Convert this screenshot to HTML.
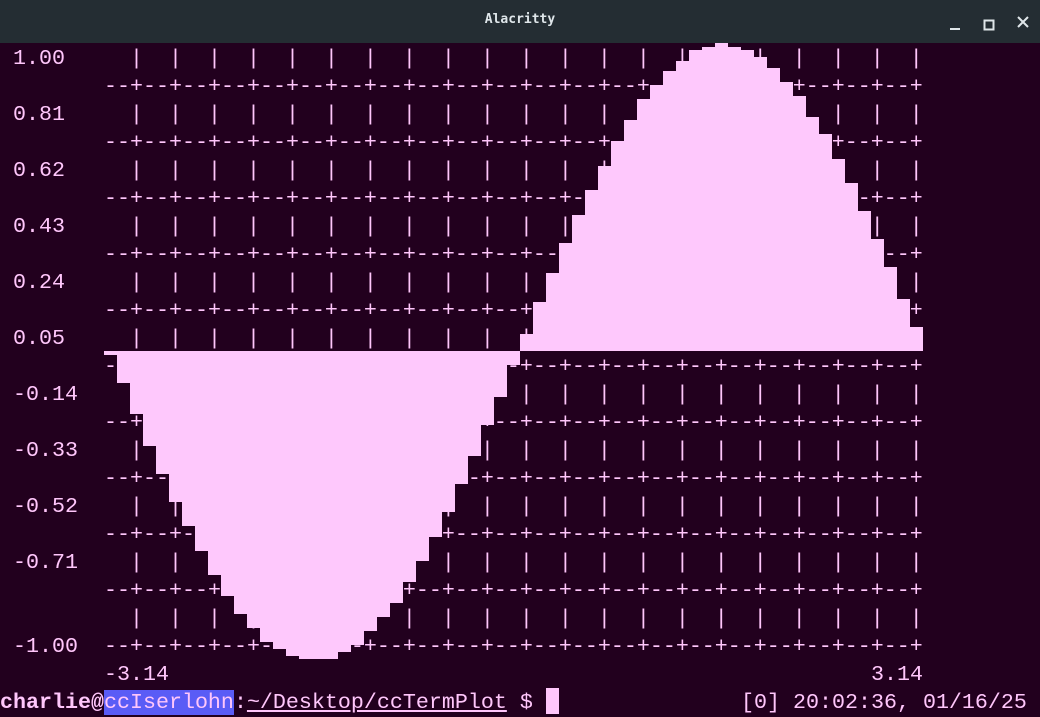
<!DOCTYPE html>
<html><head><meta charset="utf-8">
<style>
html,body{margin:0;padding:0;}
body{width:1040px;height:715px;overflow:hidden;background:#22001e;position:relative;
font-family:"Liberation Mono","DejaVu Sans Mono",monospace;}
#title{position:absolute;left:0;top:0;width:1040px;height:43px;background:#242d33;}
#title .t{position:absolute;left:0;width:1040px;top:12px;text-align:center;color:#dfe6ea;font:bold 13px "DejaVu Sans Mono","Liberation Mono",monospace;}
.r{position:absolute;height:28px;line-height:28px;font-size:21.667px;color:#ffc6fb;white-space:pre;margin-top:2px;}
svg{position:absolute;left:0;top:0;}
</style></head><body>
<div id="title"><div class="t">Alacritty</div>
<svg width="1040" height="43" style="position:absolute;left:0;top:0">
<rect x="950" y="28" width="10" height="2" fill="#dfe6ea"/>
<rect x="984.5" y="20.5" width="9" height="9" fill="none" stroke="#dfe6ea" stroke-width="2"/>
<path d="M1018 17 L1028 27 M1028 17 L1018 27" stroke="#dfe6ea" stroke-width="2"/>
</svg></div>

<div class="r" style="left:13px;top:43px">1.00</div>
<div class="r" style="left:13px;top:99px">0.81</div>
<div class="r" style="left:13px;top:155px">0.62</div>
<div class="r" style="left:13px;top:211px">0.43</div>
<div class="r" style="left:13px;top:267px">0.24</div>
<div class="r" style="left:13px;top:323px">0.05</div>
<div class="r" style="left:13px;top:379px">-0.14</div>
<div class="r" style="left:13px;top:435px">-0.33</div>
<div class="r" style="left:13px;top:491px">-0.52</div>
<div class="r" style="left:13px;top:547px">-0.71</div>
<div class="r" style="left:13px;top:631px">-1.00</div>

<div class="r" style="left:104px;top:43px">  |  |  |  |  |  |  |  |  |  |  |  |  |  |  |  |  |  |  |  |  |</div>
<div class="r" style="left:104px;top:71px">--+--+--+--+--+--+--+--+--+--+--+--+--+--+--+--+--+--+--+--+--+</div>
<div class="r" style="left:104px;top:99px">  |  |  |  |  |  |  |  |  |  |  |  |  |  |  |  |  |  |  |  |  |</div>
<div class="r" style="left:104px;top:127px">--+--+--+--+--+--+--+--+--+--+--+--+--+--+--+--+--+--+--+--+--+</div>
<div class="r" style="left:104px;top:155px">  |  |  |  |  |  |  |  |  |  |  |  |  |  |  |  |  |  |  |  |  |</div>
<div class="r" style="left:104px;top:183px">--+--+--+--+--+--+--+--+--+--+--+--+--+--+--+--+--+--+--+--+--+</div>
<div class="r" style="left:104px;top:211px">  |  |  |  |  |  |  |  |  |  |  |  |  |  |  |  |  |  |  |  |  |</div>
<div class="r" style="left:104px;top:239px">--+--+--+--+--+--+--+--+--+--+--+--+--+--+--+--+--+--+--+--+--+</div>
<div class="r" style="left:104px;top:267px">  |  |  |  |  |  |  |  |  |  |  |  |  |  |  |  |  |  |  |  |  |</div>
<div class="r" style="left:104px;top:295px">--+--+--+--+--+--+--+--+--+--+--+--+--+--+--+--+--+--+--+--+--+</div>
<div class="r" style="left:104px;top:323px">  |  |  |  |  |  |  |  |  |  |  |  |  |  |  |  |  |  |  |  |  |</div>
<div class="r" style="left:104px;top:351px">--+--+--+--+--+--+--+--+--+--+--+--+--+--+--+--+--+--+--+--+--+</div>
<div class="r" style="left:104px;top:379px">  |  |  |  |  |  |  |  |  |  |  |  |  |  |  |  |  |  |  |  |  |</div>
<div class="r" style="left:104px;top:407px">--+--+--+--+--+--+--+--+--+--+--+--+--+--+--+--+--+--+--+--+--+</div>
<div class="r" style="left:104px;top:435px">  |  |  |  |  |  |  |  |  |  |  |  |  |  |  |  |  |  |  |  |  |</div>
<div class="r" style="left:104px;top:463px">--+--+--+--+--+--+--+--+--+--+--+--+--+--+--+--+--+--+--+--+--+</div>
<div class="r" style="left:104px;top:491px">  |  |  |  |  |  |  |  |  |  |  |  |  |  |  |  |  |  |  |  |  |</div>
<div class="r" style="left:104px;top:519px">--+--+--+--+--+--+--+--+--+--+--+--+--+--+--+--+--+--+--+--+--+</div>
<div class="r" style="left:104px;top:547px">  |  |  |  |  |  |  |  |  |  |  |  |  |  |  |  |  |  |  |  |  |</div>
<div class="r" style="left:104px;top:575px">--+--+--+--+--+--+--+--+--+--+--+--+--+--+--+--+--+--+--+--+--+</div>
<div class="r" style="left:104px;top:603px">  |  |  |  |  |  |  |  |  |  |  |  |  |  |  |  |  |  |  |  |  |</div>
<div class="r" style="left:104px;top:631px">--+--+--+--+--+--+--+--+--+--+--+--+--+--+--+--+--+--+--+--+--+</div>

<svg width="1040" height="715">
<g fill="#fec8fc">
<rect x="104" y="351" width="13" height="4"/>
<rect x="117" y="351" width="13" height="32"/>
<rect x="130" y="351" width="13" height="63"/>
<rect x="143" y="351" width="13" height="95"/>
<rect x="156" y="351" width="13" height="123"/>
<rect x="169" y="351" width="13" height="151"/>
<rect x="182" y="351" width="13" height="175"/>
<rect x="195" y="351" width="13" height="200"/>
<rect x="208" y="351" width="13" height="224"/>
<rect x="221" y="351" width="13" height="245"/>
<rect x="234" y="351" width="13" height="263"/>
<rect x="247" y="351" width="13" height="277"/>
<rect x="260" y="351" width="13" height="291"/>
<rect x="273" y="351" width="13" height="298"/>
<rect x="286" y="351" width="13" height="305"/>
<rect x="299" y="351" width="13" height="308"/>
<rect x="312" y="351" width="13" height="308"/>
<rect x="325" y="351" width="13" height="308"/>
<rect x="338" y="351" width="13" height="301"/>
<rect x="351" y="351" width="13" height="294"/>
<rect x="364" y="351" width="13" height="280"/>
<rect x="377" y="351" width="13" height="266"/>
<rect x="390" y="351" width="13" height="252"/>
<rect x="403" y="351" width="13" height="231"/>
<rect x="416" y="351" width="13" height="210"/>
<rect x="429" y="351" width="13" height="186"/>
<rect x="442" y="351" width="13" height="161"/>
<rect x="455" y="351" width="13" height="133"/>
<rect x="468" y="351" width="13" height="105"/>
<rect x="481" y="351" width="13" height="74"/>
<rect x="494" y="351" width="13" height="46"/>
<rect x="507" y="351" width="13" height="14"/>
<rect x="520" y="334" width="13" height="17"/>
<rect x="533" y="302" width="13" height="49"/>
<rect x="546" y="273" width="13" height="78"/>
<rect x="559" y="243" width="13" height="108"/>
<rect x="572" y="215" width="13" height="136"/>
<rect x="585" y="190" width="13" height="161"/>
<rect x="598" y="166" width="13" height="185"/>
<rect x="611" y="141" width="13" height="210"/>
<rect x="624" y="120" width="13" height="231"/>
<rect x="637" y="99" width="13" height="252"/>
<rect x="650" y="85" width="13" height="266"/>
<rect x="663" y="71" width="13" height="280"/>
<rect x="676" y="61" width="13" height="290"/>
<rect x="689" y="50" width="13" height="301"/>
<rect x="702" y="47" width="13" height="304"/>
<rect x="715" y="43" width="13" height="308"/>
<rect x="728" y="47" width="13" height="304"/>
<rect x="741" y="50" width="13" height="301"/>
<rect x="754" y="57" width="13" height="294"/>
<rect x="767" y="68" width="13" height="283"/>
<rect x="780" y="82" width="13" height="269"/>
<rect x="793" y="96" width="13" height="255"/>
<rect x="806" y="117" width="13" height="234"/>
<rect x="819" y="134" width="13" height="217"/>
<rect x="832" y="159" width="13" height="192"/>
<rect x="845" y="183" width="13" height="168"/>
<rect x="858" y="211" width="13" height="140"/>
<rect x="871" y="239" width="13" height="112"/>
<rect x="884" y="267" width="13" height="84"/>
<rect x="897" y="299" width="13" height="52"/>
<rect x="910" y="327" width="13" height="24"/>
</g>
</svg>

<div class="r" style="left:104px;top:659px">-3.14</div>
<div class="r" style="left:871px;top:659px">3.14</div>
<div class="r" style="left:0;top:687px"><b>charlie@</b><span style="background:#5a5cf6">ccIserlohn</span>:<span style="text-decoration:underline">~/Desktop/ccTermPlot</span> $ </div>
<div style="position:absolute;left:546px;top:688px;width:13px;height:26px;background:#ffc6fb"></div>
<div class="r" style="left:741px;top:687px">[0] 20:02:36, 01/16/25</div>
</body></html>
